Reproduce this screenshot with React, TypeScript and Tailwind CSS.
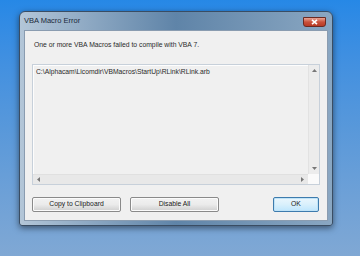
import React from "react";

const font = { fontFamily: '"Liberation Sans", Arial, sans-serif' };

function Btn({ label, w, primary }: { label: string; w: string; primary?: boolean }) {
  return (
    <div
      className={`${w} h-[15px] rounded-[2px] border flex items-center justify-center text-[6.8px] text-[#1a1a1a] ${
        primary
          ? "border-[#3d7bad] bg-gradient-to-b from-[#eaf6fd] via-[#d9f0fc] to-[#bee6fd] shadow-[inset_0_0_0_1px_#bfe3f7]"
          : "border-[#8a8a8a] bg-gradient-to-b from-[#f2f2f2] via-[#ebebeb] to-[#cfcfcf] shadow-[inset_0_0_0_1px_#fbfbfb]"
      }`}
    >
      {label}
    </div>
  );
}

export default function App() {
  return (
    <div
      className="w-[360px] h-[256px] overflow-hidden bg-gradient-to-b from-[#2688e6] via-[#5898da] to-[#80a8d4] pt-[11px] pl-[19px]"
      style={font}
    >
      <div className="w-[314px] h-[215px] rounded-t-[6px] rounded-b-[3px] border border-[#3a4d63] bg-gradient-to-r from-[#b3c6d8] via-[#5f84a8] to-[#8aa7c2] shadow-[0_2px_6px_rgba(0,0,0,0.5)] flex flex-col">
        <div className="h-[18px] flex items-center justify-between pl-[4px] pr-[6px]">
          <span className="text-[7.5px] text-[#1b2a3a]">VBA Macro Error</span>
          <div className="w-[23px] h-[10px] mt-[1px] rounded-b-[3px] border border-[#6b2a22] bg-gradient-to-b from-[#e8a393] via-[#c8503a] to-[#b93a24] flex items-center justify-center">
            <svg width="7" height="6" viewBox="0 0 7 6">
              <path d="M1 0.8 L6 5.2 M6 0.8 L1 5.2" stroke="#fff" strokeWidth="1.6" />
            </svg>
          </div>
        </div>
        <div className="mx-[4px] mb-[4px] flex-1 bg-[#f0f0f0] border border-[#8a9cb0] flex flex-col px-[7px]">
          <div className="h-[28px] flex items-center pl-[2px] text-[6.8px] text-[#2a2a2a]">
            One or more VBA Macros failed to compile with VBA 7.
          </div>
          <div className="mt-[5px] h-[121px] border border-[#c7d0da] bg-[#f0f0f0] flex flex-col">
            <div className="flex flex-1">
              <div className="flex-1 pl-[2px] pt-[1px] text-[6.75px] text-[#2a2a2a] leading-[10px] border-l border-t border-[#fdfdfd]">
                C:\Alphacam\Licomdir\VBMacros\StartUp\RLink\RLink.arb
              </div>
              <div className="w-[11px] bg-[#ececec] border-l border-[#e2e2e2] flex flex-col items-center justify-between py-[4px]">
                <svg width="5" height="3" viewBox="0 0 5 3"><path d="M0 3 L2.5 0 L5 3Z" fill="#777" /></svg>
                <svg width="5" height="3" viewBox="0 0 5 3"><path d="M0 0 L2.5 3 L5 0Z" fill="#777" /></svg>
              </div>
            </div>
            <div className="h-[10px] flex">
              <div className="flex-1 bg-[#e8e8e8] flex items-center justify-between px-[4px] border-t border-[#e0e0e0]">
                <svg width="3" height="5" viewBox="0 0 3 5"><path d="M3 0 L0 2.5 L3 5Z" fill="#777" /></svg>
                <svg width="3" height="5" viewBox="0 0 3 5"><path d="M0 0 L3 2.5 L0 5Z" fill="#777" /></svg>
              </div>
              <div className="w-[11px] bg-[#fafafa]" />
            </div>
          </div>
          <div className="mt-[12px] flex items-center">
            <Btn label="Copy to Clipboard" w="w-[89px]" />
            <div className="w-[9px]" />
            <Btn label="Disable All" w="w-[89px]" />
            <div className="flex-1" />
            <Btn label="OK" w="w-[46px]" primary />
            <div className="w-[1px]" />
          </div>
        </div>
      </div>
    </div>
  );
}
